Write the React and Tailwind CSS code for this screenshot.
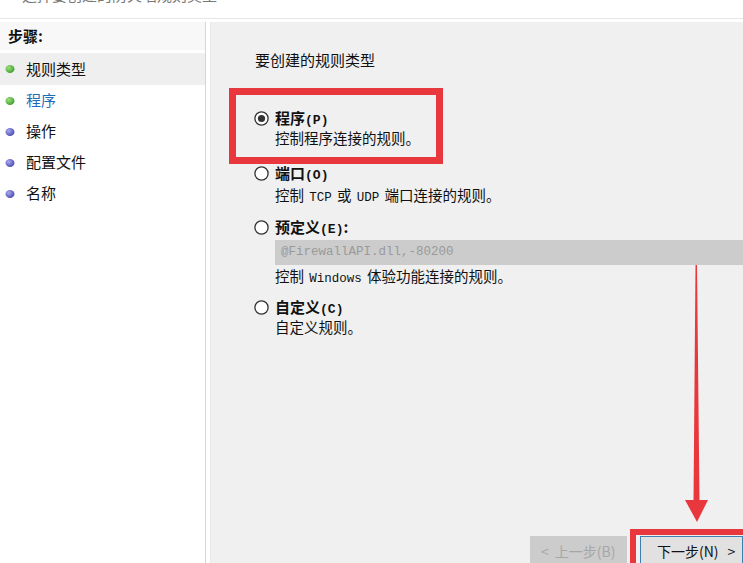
import React from "react";

const cjk = { fontFamily: '"Noto Sans CJK SC", "Noto Sans", sans-serif' };
const mono = { fontFamily: '"Liberation Mono", "Noto Sans CJK SC", monospace' };

const steps = [
  { label: "规则类型", color: "green", active: true },
  { label: "程序", color: "green", link: true },
  { label: "操作", color: "blue" },
  { label: "配置文件", color: "blue" },
  { label: "名称", color: "blue" },
];

function Bullet({ color }) {
  const c = color === "green" ? ["#9be07a", "#3f9e2e"] : ["#a9a9f0", "#4b4bb0"];
  const id = "b" + color;
  return (
    <svg width="10" height="10" viewBox="0 0 10 10" className="shrink-0">
      <defs>
        <radialGradient id={id} cx="0.35" cy="0.35" r="0.7">
          <stop offset="0" stopColor={c[0]} />
          <stop offset="1" stopColor={c[1]} />
        </radialGradient>
      </defs>
      <ellipse cx="5" cy="5" rx="4.5" ry="4" fill={`url(#${id})`} />
    </svg>
  );
}

function Radio({ checked }) {
  return (
    <svg width="15" height="15" viewBox="0 0 15 15" className="shrink-0">
      <circle cx="7.5" cy="7.5" r="6.6" fill="#fff" stroke="#333" strokeWidth="1.3" />
      {checked && <circle cx="7.5" cy="7.5" r="3.6" fill="#333" />}
    </svg>
  );
}

function Lat({ children }) {
  return (
    <span className="text-[12.5px] leading-none px-[2px]" style={mono}>
      {children}
    </span>
  );
}

function Option({ checked, title, hot, extra, className }) {
  return (
    <div className={`h-[20px] flex items-center gap-[6px] ${className}`}>
      <Radio checked={checked} />
      <span className="font-bold text-[15px] text-[#111] leading-[20px] whitespace-nowrap">
        {title}
        <span className="text-[13px] leading-none" style={mono}>({hot})</span>
        {extra}
      </span>
    </div>
  );
}

function Desc({ children, className = "" }) {
  return (
    <div className={`h-[20px] pl-[21px] text-[14.5px] leading-[20px] whitespace-nowrap ${className}`}>
      {children}
    </div>
  );
}

export default function App() {
  return (
    <div className="relative w-[743px] h-[563px] overflow-hidden bg-white" style={cjk}>
      <div className="h-[19px] overflow-hidden border-b border-[#e6e6e6] pl-[22px]">
        <div className="-mt-[15px] text-[15px] leading-[20px] text-[#777]">选择要创建的防火墙规则类型</div>
      </div>

      <div className="flex h-[544px] pt-[3px]">
        <div className="w-[206px] shrink-0 border-r border-[#d6d6d6] bg-white">
          <div className="h-[28px] pl-[8px] flex items-center font-bold text-[15px] text-[#111] bg-[#f8f8f8]">
            步骤:
          </div>
          <div className="mt-[3px] flex flex-col">
            {steps.map((s) => (
              <div
                key={s.label}
                className={`flex items-center gap-[11px] pl-[5px] text-[15px] ${
                  s.active ? "bg-[#efefef] h-[32px]" : "h-[31px]"
                } ${s.link ? "text-[#1f6cb8]" : "text-[#111]"}`}
              >
                <Bullet color={s.color} />
                {s.label}
              </div>
            ))}
          </div>
        </div>

        <div className="w-[4px] bg-white shrink-0" />

        <div className="flex-1 bg-[#f0f0f0] border-l border-[#e8e8e8] pt-[28px] pl-[43px] text-[#111]">
          <div className="h-[20px] text-[15px] leading-[20px] pl-[1px]">要创建的规则类型</div>

          <Option checked title="程序" hot="P" className="mt-[38px]" />
          <Desc>控制程序连接的规则。</Desc>

          <Option title="端口" hot="O" className="mt-[15px]" />
          <Desc className="mt-[2px]">
            控制 <Lat>TCP</Lat> 或 <Lat>UDP</Lat> 端口连接的规则。
          </Desc>

          <Option title="预定义" hot="E" extra=":" className="mt-[12px]" />
          <div
            className="ml-[21px] mt-[3px] h-[25px] bg-[#cccccc] flex items-center pl-[6px] text-[12.5px] text-[#9a9a9a]"
            style={mono}
          >
            @FirewallAPI.dll,-80200
          </div>
          <Desc className="mt-[1px]">
            控制 <Lat>Windows</Lat> 体验功能连接的规则。
          </Desc>

          <Option title="自定义" hot="C" className="mt-[11px]" />
          <Desc>自定义规则。</Desc>

          <div className="flex justify-end mt-[199px] gap-[13px]">
            <div className="w-[97px] h-[30px] bg-[#cccccc] text-[#a6a6a6] text-[14px] leading-[20px] flex items-center pl-[11px] gap-[6px]">
              <span>&lt;</span>
              <span>上一步(B)</span>
            </div>
            <div className="w-[103px] h-[30px] bg-[#e1e1e1] border border-[#3c7fb1] text-[#111] text-[14px] leading-[20px] flex items-center pl-[16px] gap-[9px]">
              <span>下一步(N)</span>
              <span>&gt;</span>
            </div>
          </div>
        </div>
      </div>

      {/* red annotations */}
      <div className="absolute left-[229px] top-[88px] w-[214px] h-[76px] border-[7px] border-[#e8383d]" />
      <div className="absolute left-[630px] top-[529px] w-[120px] h-[40px] border-[6px] border-[#e8383d]" />
      <svg className="absolute left-0 top-0 pointer-events-none" width="743" height="563">
        <polygon points="695.5,265 697,265 699.5,501 693.5,501" fill="#e8383d" />
        <polygon points="685,500 708,500 697,522" fill="#e8383d" />
      </svg>
    </div>
  );
}
